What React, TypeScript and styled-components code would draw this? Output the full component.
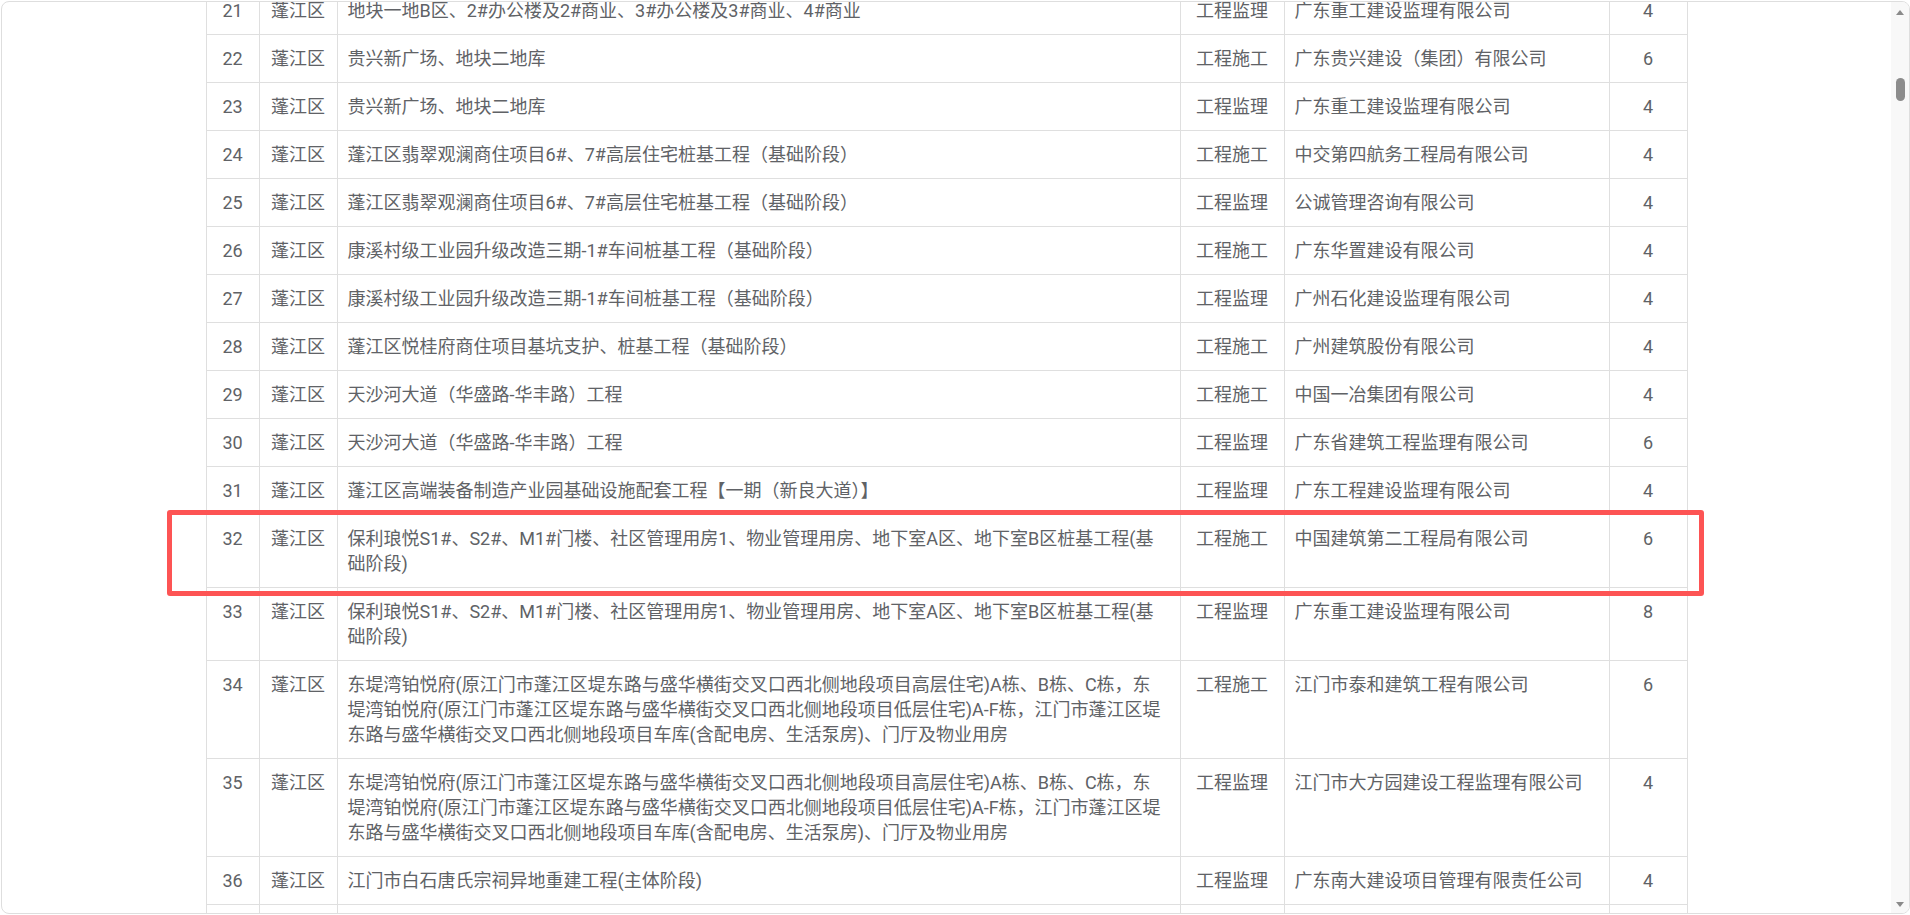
import React from 'react';
import styled, { createGlobalStyle } from 'styled-components';

const GlobalStyle = createGlobalStyle`
  html, body {
    margin: 0;
    padding: 0;
    background: #ffffff;
    overflow: hidden;
  }
  body {
    font-family: Roboto, "Noto Sans CJK SC", sans-serif;
  }
`;

const Frame = styled.div`
  margin: 1px 0 1px 1px;
  height: calc(100vh - 2px);
  box-sizing: border-box;
  border: 1px solid #dedede;
  border-radius: 8px;
  overflow: hidden;
  display: flex;
  background: #ffffff;
`;

const Viewport = styled.div`
  flex: 1;
  min-width: 0;
  overflow: hidden;
`;

const Table = styled.table`
  width: 1482px;
  margin: -16px auto 0;
  border-collapse: collapse;
  table-layout: fixed;
  font-size: 18px;
  line-height: 25px;
  color: #606266;
`;

const Cell = styled.td<{ $align?: 'left' | 'center' }>`
  position: relative;
  border: 1px solid #dfdfdf;
  padding: 11px 10px;
  vertical-align: top;
  text-align: ${(p) => p.$align ?? 'center'};
  word-break: break-all;
`;

const Line = styled.span`
  display: block;
  white-space: nowrap;
`;

const Highlight = styled.div`
  position: absolute;
  left: -40px;
  top: -5px;
  width: 1537px;
  height: 86px;
  box-sizing: border-box;
  border: 5px solid #fd5454;
  border-radius: 3px;
  pointer-events: none;
`;

const ScrollTrack = styled.div`
  width: 18px;
  flex: none;
  background: #f8f8f8;
  display: flex;
  flex-direction: column;
  align-items: center;
`;

const Arrow = styled.div<{ $dir: 'up' | 'down' }>`
  width: 0;
  height: 0;
  border-left: 4px solid transparent;
  border-right: 4px solid transparent;
  ${(p) =>
    p.$dir === 'up'
      ? 'border-bottom: 5px solid #8a8a8a; margin-top: 8px;'
      : 'border-top: 5px solid #8a8a8a; margin-bottom: 6px;'}
`;

const Thumb = styled.div`
  width: 9px;
  height: 23px;
  margin-top: 63px;
  border-radius: 5px;
  background: #8c8c8c;
`;

const Spacer = styled.div`
  flex: 1;
`;

type Row = {
  no?: number;
  district?: string;
  project: string[];
  type?: string;
  company?: string;
  count?: number;
  highlight?: boolean;
};

const P32 = [
  '保利琅悦S1#、S2#、M1#门楼、社区管理用房1、物业管理用房、地下室A区、地下室B区桩基工程(基',
  '础阶段)',
];
const P34 = [
  '东堤湾铂悦府(原江门市蓬江区堤东路与盛华横街交叉口西北侧地段项目高层住宅)A栋、B栋、C栋，东',
  '堤湾铂悦府(原江门市蓬江区堤东路与盛华横街交叉口西北侧地段项目低层住宅)A-F栋，江门市蓬江区堤',
  '东路与盛华横街交叉口西北侧地段项目车库(含配电房、生活泵房)、门厅及物业用房',
];

const rows: Row[] = [
  { no: 21, district: '蓬江区', project: ['地块一地B区、2#办公楼及2#商业、3#办公楼及3#商业、4#商业'], type: '工程监理', company: '广东重工建设监理有限公司', count: 4 },
  { no: 22, district: '蓬江区', project: ['贵兴新广场、地块二地库'], type: '工程施工', company: '广东贵兴建设（集团）有限公司', count: 6 },
  { no: 23, district: '蓬江区', project: ['贵兴新广场、地块二地库'], type: '工程监理', company: '广东重工建设监理有限公司', count: 4 },
  { no: 24, district: '蓬江区', project: ['蓬江区翡翠观澜商住项目6#、7#高层住宅桩基工程（基础阶段）'], type: '工程施工', company: '中交第四航务工程局有限公司', count: 4 },
  { no: 25, district: '蓬江区', project: ['蓬江区翡翠观澜商住项目6#、7#高层住宅桩基工程（基础阶段）'], type: '工程监理', company: '公诚管理咨询有限公司', count: 4 },
  { no: 26, district: '蓬江区', project: ['康溪村级工业园升级改造三期-1#车间桩基工程（基础阶段）'], type: '工程施工', company: '广东华置建设有限公司', count: 4 },
  { no: 27, district: '蓬江区', project: ['康溪村级工业园升级改造三期-1#车间桩基工程（基础阶段）'], type: '工程监理', company: '广州石化建设监理有限公司', count: 4 },
  { no: 28, district: '蓬江区', project: ['蓬江区悦桂府商住项目基坑支护、桩基工程（基础阶段）'], type: '工程施工', company: '广州建筑股份有限公司', count: 4 },
  { no: 29, district: '蓬江区', project: ['天沙河大道（华盛路-华丰路）工程'], type: '工程施工', company: '中国一冶集团有限公司', count: 4 },
  { no: 30, district: '蓬江区', project: ['天沙河大道（华盛路-华丰路）工程'], type: '工程监理', company: '广东省建筑工程监理有限公司', count: 6 },
  { no: 31, district: '蓬江区', project: ['蓬江区高端装备制造产业园基础设施配套工程【一期（新良大道）】'], type: '工程监理', company: '广东工程建设监理有限公司', count: 4 },
  { no: 32, district: '蓬江区', project: P32, type: '工程施工', company: '中国建筑第二工程局有限公司', count: 6, highlight: true },
  { no: 33, district: '蓬江区', project: P32, type: '工程监理', company: '广东重工建设监理有限公司', count: 8 },
  { no: 34, district: '蓬江区', project: P34, type: '工程施工', company: '江门市泰和建筑工程有限公司', count: 6 },
  { no: 35, district: '蓬江区', project: P34, type: '工程监理', company: '江门市大方园建设工程监理有限公司', count: 4 },
  { no: 36, district: '蓬江区', project: ['江门市白石唐氏宗祠异地重建工程(主体阶段)'], type: '工程监理', company: '广东南大建设项目管理有限责任公司', count: 4 },
  { project: [''] },
];

const colWidths = [53, 78, 843, 104, 325, 78];

export default function App() {
  return (
    <>
      <GlobalStyle />
      <Frame>
        <Viewport>
          <Table>
            <colgroup>
              {colWidths.map((w, i) => (
                <col key={i} style={{ width: w }} />
              ))}
            </colgroup>
            <tbody>
              {rows.map((r, i) => (
                <tr key={i}>
                  <Cell>
                    {r.highlight && <Highlight />}
                    {r.no ?? '\u00a0'}
                  </Cell>
                  <Cell>{r.district}</Cell>
                  <Cell $align="left">
                    {r.project.map((l, j) => (
                      <Line key={j}>{l || '\u00a0'}</Line>
                    ))}
                  </Cell>
                  <Cell>{r.type}</Cell>
                  <Cell $align="left">{r.company}</Cell>
                  <Cell>{r.count}</Cell>
                </tr>
              ))}
            </tbody>
          </Table>
        </Viewport>
        <ScrollTrack>
          <Arrow $dir="up" />
          <Thumb />
          <Spacer />
          <Arrow $dir="down" />
        </ScrollTrack>
      </Frame>
    </>
  );
}
